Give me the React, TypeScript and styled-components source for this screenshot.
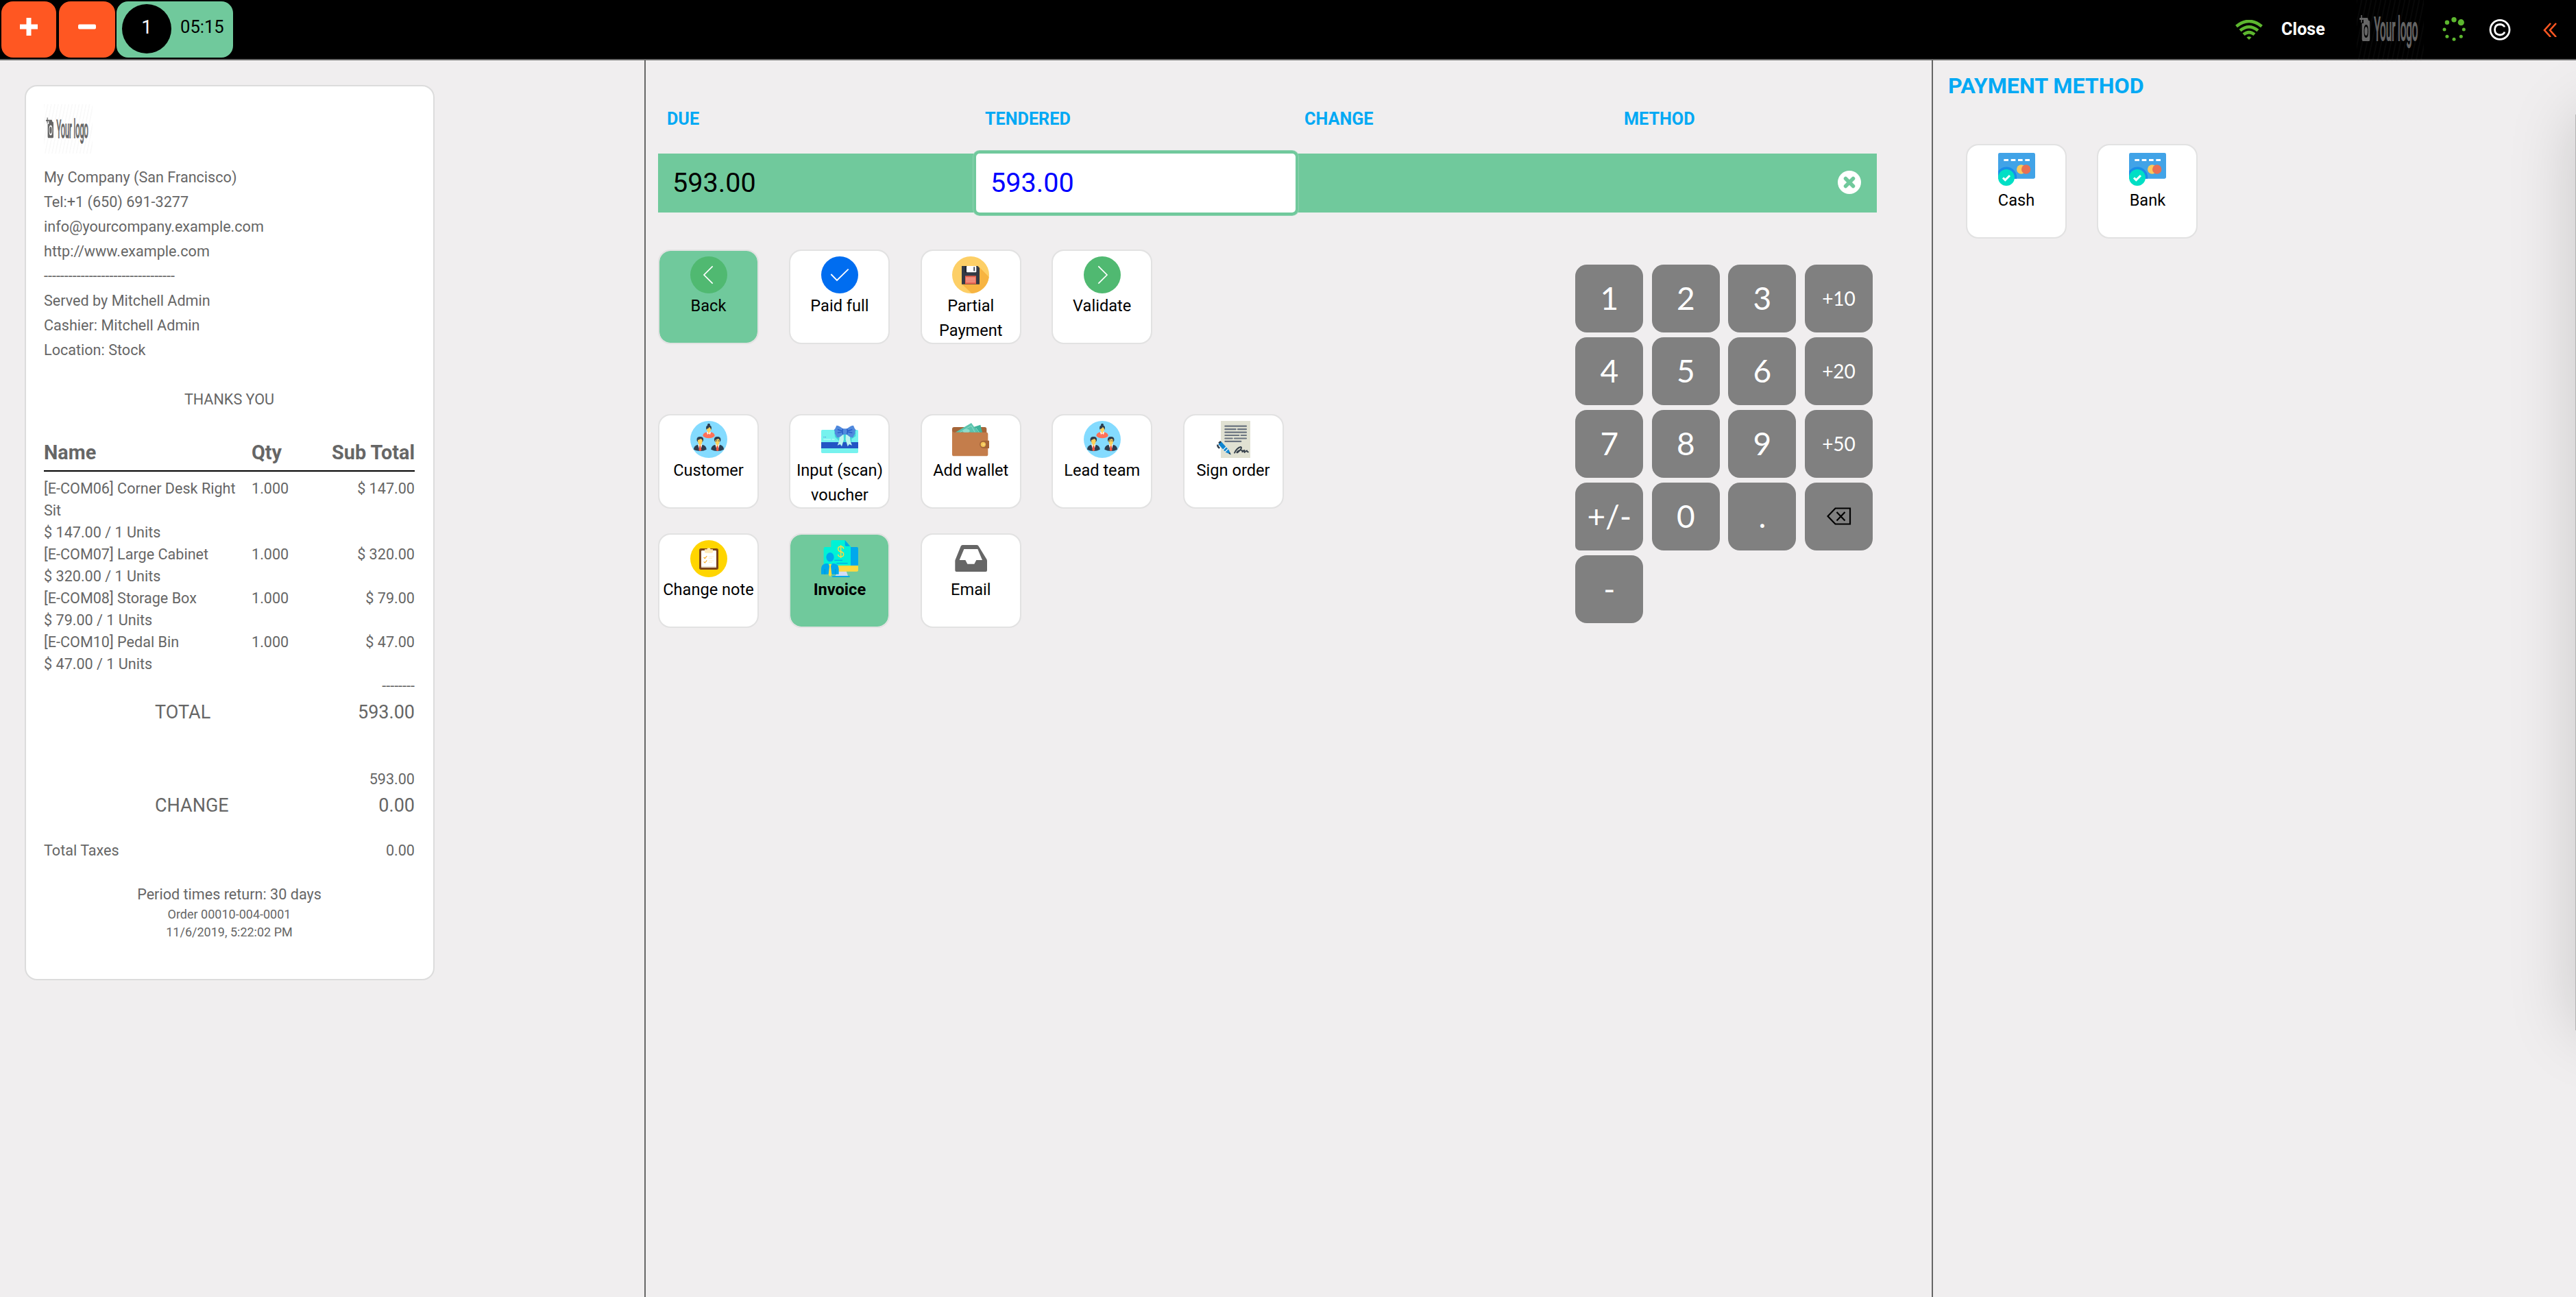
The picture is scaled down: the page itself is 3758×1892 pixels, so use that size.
import React from "react";
import styled, { createGlobalStyle } from "styled-components";

const GREEN = "#70c99c";
const BLUE = "#03a9f4";
const INK = "#666666";

const GlobalStyle = createGlobalStyle`
  * { box-sizing: border-box; }
  html, body { margin: 0; padding: 0; background: #f0eeef; }
  body { font-family: Roboto, "Liberation Sans", sans-serif; color: #000; }
`;

const Screen = styled.div`
  position: relative;
  width: 3758px;
  height: 1892px;
  overflow: hidden;
  display: flex;
  flex-direction: column;
  background: #f0eeef;
`;

/* ---------- top bar ---------- */

const TopBar = styled.header`
  position: relative;
  z-index: 2;
  flex: none;
  height: 88px;
  border-bottom: 2px solid #666;
  background: #000;
  display: flex;
  justify-content: space-between;
`;

const OrderTabs = styled.div`
  display: flex;
  padding: 2px 0 2px 2px;
`;

const SquareButton = styled.button<{ $width: number; $gap: number }>`
  width: ${(p) => p.$width}px;
  height: 82px;
  margin-right: ${(p) => p.$gap}px;
  border: 0;
  padding: 0 0 8px;
  border-radius: 17px;
  background: #ff5722;
  display: flex;
  align-items: center;
  justify-content: center;
`;

const OrderTab = styled.div`
  width: 170px;
  height: 82px;
  border-radius: 17px;
  background: ${GREEN};
  display: flex;
  padding: 4px 0 0 8px;
`;

const OrderNumber = styled.span`
  width: 72px;
  height: 72px;
  border-radius: 50%;
  background: #000;
  color: #fff;
  font-size: 28px;
  line-height: 68px;
  text-align: center;
`;

const OrderTime = styled.span`
  margin-left: 13px;
  font-size: 25.6px;
  line-height: 67px;
`;

const StatusArea = styled.div`
  display: flex;
  align-items: center;
  height: 86px;
`;

const CloseLabel = styled.span`
  width: 66px;
  margin: 0 44px 0 27px;
  font-size: 25.2px;
  font-weight: 700;
  line-height: 36px;
  color: #fff;
`;

const StatusIcon = styled.svg<{ $gap: number }>`
  flex: none;
  margin-right: ${(p) => p.$gap}px;
`;

const LogoSvg = styled.svg<{ $gap: number }>`
  display: block;
  flex: none;
  margin-right: ${(p) => p.$gap}px;
`;

/* ---------- columns ---------- */

const Columns = styled.main`
  flex: 1;
  display: flex;
`;

const ReceiptColumn = styled.section`
  width: 940px;
  padding: 36px 0 0 36px;
`;

const PaymentColumn = styled.section`
  width: 1878px;
  border-left: 2px solid #666;
  padding: 68px 0 0 18px;
`;

const MethodColumn = styled.section`
  flex: 1;
  border-left: 2px solid #666;
  padding: 16px 0 0 22px;
`;

/* ---------- receipt ---------- */

const Receipt = styled.article`
  width: 598px;
  height: 1306px;
  border: 2px solid #dcdcdc;
  border-radius: 18px;
  background: #fff;
  padding: 26px 27px 0 26px;
  color: ${INK};
  font-size: 21.6px;
  line-height: 32px;
`;

const Company = styled.div`
  margin-top: 17px;
  line-height: 36px;
`;

const Centered = styled.div<{ $small?: boolean }>`
  text-align: center;
  font-size: ${(p) => (p.$small ? 18 : 21.6)}px;
  line-height: ${(p) => (p.$small ? 26 : 32)}px;
`;

const Thanks = styled(Centered)`
  line-height: 36px;
  margin-top: 36px;
`;

const LineGrid = styled.div`
  display: grid;
  grid-template-columns: 303px 100px 1fr;
`;

const LineHead = styled(LineGrid)`
  margin-top: 43px;
  padding-bottom: 10px;
  border-bottom: 2px solid #000;
  font-size: 28.8px;
  font-weight: 700;
  margin-bottom: 9px;
`;

const Product = styled.div`
  width: 284px;
`;

const Right = styled.div`
  text-align: right;
`;

const SumRow = styled.div<{ $top?: number; $large?: boolean; $indent?: number }>`
  display: flex;
  justify-content: space-between;
  margin-top: ${(p) => p.$top ?? 0}px;
  padding-left: ${(p) => p.$indent ?? 0}px;
  font-size: ${(p) => (p.$large ? 27 : 21.6)}px;
`;

const Footer = styled.footer`
  margin-top: 32px;
`;

/* ---------- payment lines ---------- */

const PayGrid = styled.div`
  width: 1778px;
  display: grid;
  grid-template-columns: 464px 466px 466px 1fr;
`;

const PayHead = styled(PayGrid)`
  color: ${BLUE};
  font-size: 25.2px;
  font-weight: 700;
  line-height: 36px;
  margin-bottom: 32px;
  span { padding-left: 13px; }
`;

const PayLine = styled(PayGrid)`
  height: 86px;
  background: ${GREEN};
  font-size: 39.6px;
  line-height: 86px;
`;

const Due = styled.div`
  padding-left: 21px;
`;

const Tendered = styled.div`
  padding-left: 21px;
  background: #fff;
  color: #00f;
  border-radius: 5px;
  box-shadow: 0 0 0 4px ${GREEN}, 0 0 0 5px #8fd2b1;
`;

const RemoveCell = styled.div`
  display: flex;
  align-items: center;
  justify-content: flex-end;
  padding: 0 23px 2px 0;
`;

/* ---------- action tiles ---------- */

const Workspace = styled.div`
  display: flex;
  justify-content: space-between;
  width: 1772px;
  margin-top: 54px;
`;

const TileRow = styled.div<{ $top?: number }>`
  display: flex;
  gap: 44.4px;
  margin-top: ${(p) => p.$top ?? 0}px;
`;

const Tile = styled.button<{ $active?: boolean; $bold?: boolean }>`
  width: 147px;
  height: 138px;
  padding: 8px 0 0;
  border: 2px solid #e2e2e2;
  border-radius: 18px;
  background: ${(p) => (p.$active ? GREEN : "#fff")};
  background-clip: padding-box;
  display: flex;
  flex-direction: column;
  align-items: center;
  font-family: inherit;
  font-size: 23.6px;
  font-weight: ${(p) => (p.$bold ? 700 : 400)};
  line-height: 36px;
  color: #000;
  text-align: center;
  svg { display: block; flex: none; }
`;

const Keypad = styled.div`
  margin-top: 22px;
  display: grid;
  grid-template-columns: repeat(4, 99px);
  grid-auto-rows: 99px;
  column-gap: 12.6px;
  row-gap: 7px;
`;

const Key = styled.button<{ $small?: boolean; $square?: boolean }>`
  border: 0;
  padding: 0 0 2px;
  border-radius: ${(p) => (p.$square ? "17px 17px 17px 7px" : "17px")};
  background: #808080;
  color: #fff;
  font-family: Lato, sans-serif;
  font-size: ${(p) => (p.$small ? 28 : 46)}px;
  display: flex;
  align-items: center;
  justify-content: center;
`;

/* ---------- methods ---------- */

const MethodTitle = styled.h2`
  margin: 0;
  font-size: 32.2px;
  font-weight: 700;
  line-height: 42px;
  color: ${BLUE};
`;

const MethodTiles = styled(TileRow)`
  margin: 64px 0 0 26px;
`;

const DrawerEdge = styled.aside`
  position: absolute;
  z-index: 1;
  left: 3757px;
  top: 167px;
  width: 400px;
  height: 1336px;
  background: #b4b3b3;
  box-shadow: 0 0 90px rgba(0, 0, 0, 0.17);
`;

/* ---------- drawings ---------- */

const Logo = ({ width, height, id, gap = 0 }: { width: number; height: number; id: string; gap?: number }) => (
  <LogoSvg $gap={gap} width={width} height={height} viewBox="0 0 98 92" preserveAspectRatio="none">
    <defs>
      <pattern id={id} width="7" height="92" patternUnits="userSpaceOnUse" patternTransform="skewX(-12)">
        <rect width="2" height="92" fill="#808080" opacity="0.06" />
      </pattern>
    </defs>
    <rect width="98" height="92" fill={`url(#${id})`} />
    <g fill="#666">
      <path d="M6.300 25h1.600v4h2v3h-2v4H6.300v-4h-2v-3h2z" />
      <path fillRule="evenodd" d="M10 29h6l1.300 4h1q1 0 1 3v24q0 3-1 3H9q-1.300 0-1.300-3V37H10zM13.800 39q-3.300 0-3.300 9.500t3.300 9.500 3.300-9.500-3.300-9.500zM13.800 42q2.300 0 2.300 6.500t-2.300 6.500-2.300-6.500 2.300-6.500z" />
      <text transform="translate(25.500 62) scale(.316 1)" fontFamily="Roboto" fontWeight="400" fontSize="48" stroke="#666" strokeWidth="2">
        Your logo
      </text>
    </g>
  </LogoSvg>
);

const Icon = ({ children }: { children: React.ReactNode }) => (
  <svg width="54" height="54" viewBox="0 0 162 162">{children}</svg>
);

const ArrowIcon = ({ right }: { right?: boolean }) => (
  <Icon>
    <circle cx="81" cy="81" r="81" fill="#50b971" />
    <path d={right ? "M64 43l38 38-38 38" : "M98 43L60 81l38 38"} fill="none" stroke="#fff" strokeWidth="5" />
  </Icon>
);

const CheckIcon = () => (
  <Icon>
    <circle cx="81" cy="81" r="81" fill="#006df0" />
    <path d="M43 78l26 27 50-49" fill="none" stroke="#fff" strokeWidth="5.500" />
  </Icon>
);

const FloppyIcon = () => (
  <Icon>
    <circle cx="81" cy="81" r="81" fill="#fdcf66" />
    <path d="M120 48l41 42A81 81 0 0 1 86 162L42 121z" fill="#f7b441" />
    <path d="M42 42h70l8 8v72H42z" fill="#333a45" />
    <rect x="56" y="42" width="50" height="29" fill="#20262f" />
    <rect x="63" y="42" width="43" height="28" rx="3" fill="#fff" />
    <rect x="94" y="46" width="5" height="18" fill="#333a45" />
    <rect x="57" y="85" width="48" height="36" fill="#ea6450" />
    <path d="M60 95h42M60 103h42M60 111h42" stroke="#f6b9ae" strokeWidth="3.500" />
  </Icon>
);

const Suit = ({ x }: { x: number }) => (
  <g transform={`translate(${x} 0)`}>
    <path d="M-28 125q0-16 18-21h20q18 5 18 21-12 7-28 7t-28-7z" fill="#2c3e50" />
    <path d="M-10 103h20L1 132h-2z" fill="#fff" />
    <path d="M-3 108h6l3 20-6 5-6-5z" fill="#f1543f" />
    <path d="M-14 86q-3-17 14-17t14 17l-4 6h-20z" fill="#2c3e50" />
    <path d="M-10 84l14-6 6 6q0 16-6 19v5l-4 3-4-3v-5q-6-3-6-19z" fill="#ffd15c" />
  </g>
);

const TeamIcon = () => (
  <Icon>
    <circle cx="81" cy="81" r="81" fill="#84dbff" />
    <path d="M55 66q0-14 18-17h16q18 3 18 17-10 10-26 10T55 66z" fill="#ff7058" />
    <path d="M72 48h18l-3 12-6-5-6 5z" fill="#fff" />
    <circle cx="81" cy="17" r="6" fill="#2c3e50" />
    <circle cx="81" cy="31" r="12" fill="#2c3e50" />
    <path d="M71 36q10-3 13-10 4 7 7 9-1 10-6 12v5l-4 3-4-3v-5q-5-2-6-11z" fill="#ffd15c" />
    <Suit x={43} />
    <Suit x={119} />
    <path d="M111 87h6m4 0h6" stroke="#2c3e50" strokeWidth="3" />
  </Icon>
);

const VoucherIcon = () => (
  <Icon>
    <rect y="39" width="162" height="102" rx="5" fill="#76f2ee" />
    <path d="M57 39h94v28l-18 12v14H84L60 70z" fill="#43d5d9" />
    <rect y="93" width="162" height="27" fill="#2355c4" />
    <path d="M10 71h4m3 0h4" stroke="#5089dd" strokeWidth="3" />
    <path d="M10 81h32m5 0h12" stroke="#c9fffb" strokeWidth="3" />
    <path d="M80 64l18-4 1 22-9 30-7-10-12 5q10-20 9-43z" fill="#bff5ee" />
    <path d="M126 64l-18-4-1 22 9 30 7-10 12 5q-10-20-9-43z" fill="#bff5ee" />
    <path d="M95 34Q80 20 67 20q-5 14-11 20 6 5 3 15 6 8 10 18 17-2 26-14h18q9 12 26 14 4-10 10-18-3-10 3-15-6-6-11-20-13 0-28 14z" fill="#5089dd" />
    <path d="M72 38l20 6M72 52l20-4M136 38l-20 6M136 52l-20-4M95 34q-5 12 0 25M113 34q5 12 0 25" fill="none" stroke="#2355c4" strokeWidth="3.500" />
  </Icon>
);

const WalletIcon = () => (
  <Icon>
    <rect y="27" width="151" height="50" rx="9" fill="#a56539" />
    <path d="M96 26l28-9 9 36H80z" fill="#3fb39b" />
    <path d="M14 50l70-41 30 41z" fill="#5cc4ae" />
    <path d="M34 50l50-29 16 29M104 31l16 22" fill="none" stroke="#8fdccb" strokeWidth="3" />
    <ellipse cx="62" cy="44" rx="15" ry="9" fill="#8fdccb" />
    <path d="M0 43q2 7 10 7h140q7 0 7 8v88q0 8-8 8H8q-8 0-8-8z" fill="#c47d4b" />
    <path d="M162 86h-25a17 17 0 0 0 0 34h25z" fill="#a56539" />
    <circle cx="136" cy="103" r="11" fill="#f4c455" />
    <circle cx="138" cy="103" r="5" fill="#f6d57c" />
  </Icon>
);

const SignIcon = () => (
  <Icon>
    <rect x="27" width="129" height="162" fill="#e0e1d2" />
    <path
      d="M46 23h92M46 36.500h46M102 36.500h36M46 50h92M46 63h60M116 63h22M46 76.500h31M87 76.500h51M46 89.500h69"
      stroke="#69737f"
      strokeWidth="6.500"
      strokeLinecap="round"
    />
    <path d="M22 96l34 37" stroke="#0e85d0" strokeWidth="17" />
    <path d="M13 104q-1 10 9 15M18 97l9-7" fill="none" stroke="#2f3b47" strokeWidth="7" />
    <path d="M37 127l14-14M45 136l13-13" stroke="#fff" strokeWidth="3.500" />
    <path d="M50 138l12-11 9 20z" fill="#0e85d0" />
    <path d="M61 143l6-6 4 11z" fill="#2f3b47" />
    <path d="M87 140q10-22 27-26 8 2-3 14-12 14-14 10 6-10 18-10 9 0 5 9 6-9 10-8-2 8 1 9 6-8 10-8 0 6 6 6" fill="none" stroke="#343f4a" strokeWidth="5.500" strokeLinecap="round" />
  </Icon>
);

const NoteIcon = () => (
  <Icon>
    <circle cx="81" cy="81" r="81" fill="#ffd500" />
    <rect x="39" y="36" width="84" height="93" rx="8" fill="#7b4419" />
    <rect x="48" y="45" width="66" height="75" rx="4" fill="#fff" />
    <path d="M48 114h66v2q0 4-4 4H52q-4 0-4-4z" fill="#e8dccb" />
    <path d="M63 40h10q1-6 8-6t8 6h10v11q0 5-5 5H68q-5 0-5-5z" fill="#ffe9b8" />
    <path d="M59 75l5 5 9-11M59 94l5 5 9-11" fill="none" stroke="#f5a81c" strokeWidth="3.500" />
    <path d="M80 72h24M80 79h16M80 90h24M80 97h16" stroke="#fff0cd" strokeWidth="3.500" />
  </Icon>
);

const InvoiceIcon = () => (
  <Icon>
    <path d="M76 136h34l8 22H60z" fill="#d3dcf5" />
    <rect x="48" y="156" width="77" height="6" rx="2" fill="#00a8ec" />
    <path d="M110 30h46q6 0 6 6v76h-52z" fill="#00a8ec" />
    <path d="M60 111h102v20q0 6-6 6H60z" fill="#ffd93f" />
    <path d="M11 36q0-6 6-6h26V6q0-6 6-6h55l25 27v84H11z" fill="#00f2d6" />
    <path d="M104 0l22 26h-17q-5 0-5-5z" fill="#00a8ec" />
    <path d="M98 38q0-10-12-10t-12 10 12 12 12 12-12 10-12-10M86 22v56" fill="none" stroke="#ffd93f" strokeWidth="4.500" />
    <path d="M58 88h35M67 101h49" stroke="#00a8ec" strokeWidth="3.500" />
    <ellipse cx="39" cy="74" rx="17" ry="20" fill="#00a8ec" />
    <path d="M0 149v-22q0-22 20-25h37q20 3 20 25v22z" fill="#00a8ec" />
    <path d="M30 101h18l-9 15z" fill="#00f2d6" />
    <path d="M33 104h12l-3 10 4 36-7 10-7-10 4-36z" fill="#ffd93f" />
    <path d="M16 126v24M62 126v24" stroke="#0093d0" strokeWidth="2.500" />
  </Icon>
);

const InboxIcon = () => (
  <Icon>
    <path
      fillRule="evenodd"
      d="M46 21h62q6 0 8 5l35 57q2 4 2 8v41q0 6-6 6H19q-6 0-6-6V91q0-4 2-8l23-57q2-5 8-5zM52 39L32 87h26l9 17h30l9-17h26L112 39z"
      fill="#666"
    />
  </Icon>
);

const CardIcon = () => (
  <Icon>
    <rect y="9" width="162" height="113" rx="7" fill="#41a3e7" />
    <path d="M0 89a45 45 0 0 1 81 33H0z" fill="#1a8de8" />
    <path d="M25 40.500h20M56 40.500h20M87 40.500h20M118 40.500h20" stroke="#fff" strokeWidth="9" />
    <circle cx="101" cy="81" r="20" fill="#fdc95b" />
    <circle cx="122" cy="81" r="20" fill="#e86f53" />
    <circle cx="36" cy="117" r="36" fill="#00dfc5" />
    <path d="M21 118l10 10 20-20" fill="none" stroke="#fff" strokeWidth="9" />
  </Icon>
);

const spinnerDots = [
  [17, 3.7, 3.7], [27.3, 7.7, 4.6], [31.3, 18, 2.5], [27.3, 28.2, 2.5],
  [17, 32.2, 2.5], [6.9, 28.2, 2.5], [3, 18, 2.5], [6.9, 7.7, 3.2],
];

const BackspaceIcon = () => (
  <svg width="36" height="26" viewBox="0 0 36 26" fill="none" stroke="#000" strokeWidth="2.200">
    <path d="M12.500 1.500h21.500v23H12.500L1.500 13z" />
    <path d="M14.500 7l12 12.500M26.500 7l-12 12.500" />
  </svg>
);

/* ---------- data ---------- */

const lines = [
  ["[E-COM06] Corner Desk Right Sit", "$ 147.00 / 1 Units", "$ 147.00"],
  ["[E-COM07] Large Cabinet", "$ 320.00 / 1 Units", "$ 320.00"],
  ["[E-COM08] Storage Box", "$ 79.00 / 1 Units", "$ 79.00"],
  ["[E-COM10] Pedal Bin", "$ 47.00 / 1 Units", "$ 47.00"],
];

const companyLines = [
  "My Company (San Francisco)",
  "Tel:+1 (650) 691-3277",
  "info@yourcompany.example.com",
  "http://www.example.com",
  "--------------------------------",
  "Served by Mitchell Admin",
  "Cashier: Mitchell Admin",
  "Location: Stock",
];

const keys = ["1", "2", "3", "+10", "4", "5", "6", "+20", "7", "8", "9", "+50", "+/-", "0", ".", "del", "-"];

export default function App() {
  return (
    <Screen>
      <GlobalStyle />
      <TopBar>
        <OrderTabs>
          <SquareButton $width={80} $gap={4}>
            <svg width="26" height="26" viewBox="0 0 26 26">
              <path d="M13 2.500v21M2.500 13h21" stroke="#fff" strokeWidth="7" strokeLinecap="square" />
            </svg>
          </SquareButton>
          <SquareButton $width={82} $gap={2}>
            <svg width="26" height="26" viewBox="0 0 26 26">
              <rect y="9.500" width="26" height="7" rx="2" fill="#fff" />
            </svg>
          </SquareButton>
          <OrderTab>
            <OrderNumber>1</OrderNumber>
            <OrderTime>05:15</OrderTime>
          </OrderTab>
        </OrderTabs>
        <StatusArea>
          <StatusIcon $gap={0} width="40" height="29" viewBox="0 0 40 29" fill="none" stroke="#5db72f" strokeWidth="4.600">
            <path d="M1.500 9.500Q20-5.500 38.500 9.500M7 15.500q13-10.500 26 0M12 21.300q8-6.500 16 0" />
            <path d="M16.500 25.500q3.500-2.500 7 0L20 29z" fill="#5db72f" stroke="none" />
          </StatusIcon>
          <CloseLabel>Close</CloseLabel>
          <Logo width={98} height={92} id="logo-lines-bar" gap={27} />
          <StatusIcon $gap={34} width="34" height="36" viewBox="0 0 34 36" fill="#5db72f">
            {spinnerDots.map(([x, y, r]) => (
              <circle key={`${x}-${y}`} cx={x} cy={y} r={r} />
            ))}
          </StatusIcon>
          <StatusIcon $gap={47} width="32" height="34" viewBox="0 0 32 34" fill="none" stroke="#fff">
            <circle cx="16" cy="17.300" r="14" strokeWidth="2.800" />
            <path d="M22.300 13.500V12.500Q20 9.500 16 9.500 8.500 10 8.500 17.300T16 25q4 0 6.300-3v-1.500" strokeWidth="2.800" />
          </StatusIcon>
          <StatusIcon $gap={28} width="20" height="22" viewBox="0 0 20 22" fill="none" stroke="#ff5722" strokeWidth="2.600">
            <path d="M11 2L2 12l9 10M19 2l-9 10 9 10" />
          </StatusIcon>
        </StatusArea>
      </TopBar>
      <Columns>
        <ReceiptColumn>
          <Receipt>
            <Logo width={71} height={72} id="logo-lines-receipt" />
            <Company>
              {companyLines.map((line) => (
                <div key={line}>{line}</div>
              ))}
            </Company>
            <Thanks>THANKS YOU</Thanks>
            <LineHead>
              <div>Name</div>
              <div>Qty</div>
              <Right>Sub Total</Right>
            </LineHead>
            {lines.map(([name, unit, total]) => (
              <LineGrid key={name}>
                <Product>
                  {name}
                  <div>{unit}</div>
                </Product>
                <div>1.000</div>
                <Right>{total}</Right>
              </LineGrid>
            ))}
            <Right>--------</Right>
            <SumRow $large $top={6} $indent={162}>
              <span>TOTAL</span>
              <span>593.00</span>
            </SumRow>
            <SumRow $top={66}>
              <span />
              <span>593.00</span>
            </SumRow>
            <SumRow $large $top={6} $indent={162}>
              <span>CHANGE</span>
              <span>0.00</span>
            </SumRow>
            <SumRow $top={34}>
              <span>Total Taxes</span>
              <span>0.00</span>
            </SumRow>
            <Footer>
              <Centered>Period times return: 30 days</Centered>
              <Centered $small>Order 00010-004-0001</Centered>
              <Centered $small>11/6/2019, 5:22:02 PM</Centered>
            </Footer>
          </Receipt>
        </ReceiptColumn>
        <PaymentColumn>
          <PayHead>
            <span>DUE</span>
            <span>TENDERED</span>
            <span>CHANGE</span>
            <span>METHOD</span>
          </PayHead>
          <PayLine>
            <Due>593.00</Due>
            <Tendered>593.00</Tendered>
            <div />
            <RemoveCell>
              <svg width="34" height="34" viewBox="0 0 34 34">
                <circle cx="17" cy="17" r="17" fill="#fff" />
                <path d="M11.500 11.500l11 11M22.500 11.500l-11 11" stroke={GREEN} strokeWidth="5.500" strokeLinecap="round" />
              </svg>
            </RemoveCell>
          </PayLine>
          <Workspace>
            <div>
              <TileRow>
                <Tile $active><ArrowIcon />Back</Tile>
                <Tile><CheckIcon />Paid full</Tile>
                <Tile><FloppyIcon />Partial Payment</Tile>
                <Tile><ArrowIcon right />Validate</Tile>
              </TileRow>
              <TileRow $top={102}>
                <Tile><TeamIcon />Customer</Tile>
                <Tile><VoucherIcon />Input (scan) voucher</Tile>
                <Tile><WalletIcon />Add wallet</Tile>
                <Tile><TeamIcon />Lead team</Tile>
                <Tile><SignIcon />Sign order</Tile>
              </TileRow>
              <TileRow $top={36}>
                <Tile><NoteIcon />Change note</Tile>
                <Tile $active $bold><InvoiceIcon />Invoice</Tile>
                <Tile><InboxIcon />Email</Tile>
              </TileRow>
            </div>
            <Keypad>
              {keys.map((k) => (
                <Key key={k} $small={/^\+\d/.test(k)} $square={k === "+/-"}>
                  {k === "del" ? <BackspaceIcon /> : k}
                </Key>
              ))}
            </Keypad>
          </Workspace>
        </PaymentColumn>
        <MethodColumn>
          <MethodTitle>PAYMENT METHOD</MethodTitle>
          <MethodTiles>
            <Tile><CardIcon />Cash</Tile>
            <Tile><CardIcon />Bank</Tile>
          </MethodTiles>
        </MethodColumn>
      </Columns>
      <DrawerEdge />
    </Screen>
  );
}
